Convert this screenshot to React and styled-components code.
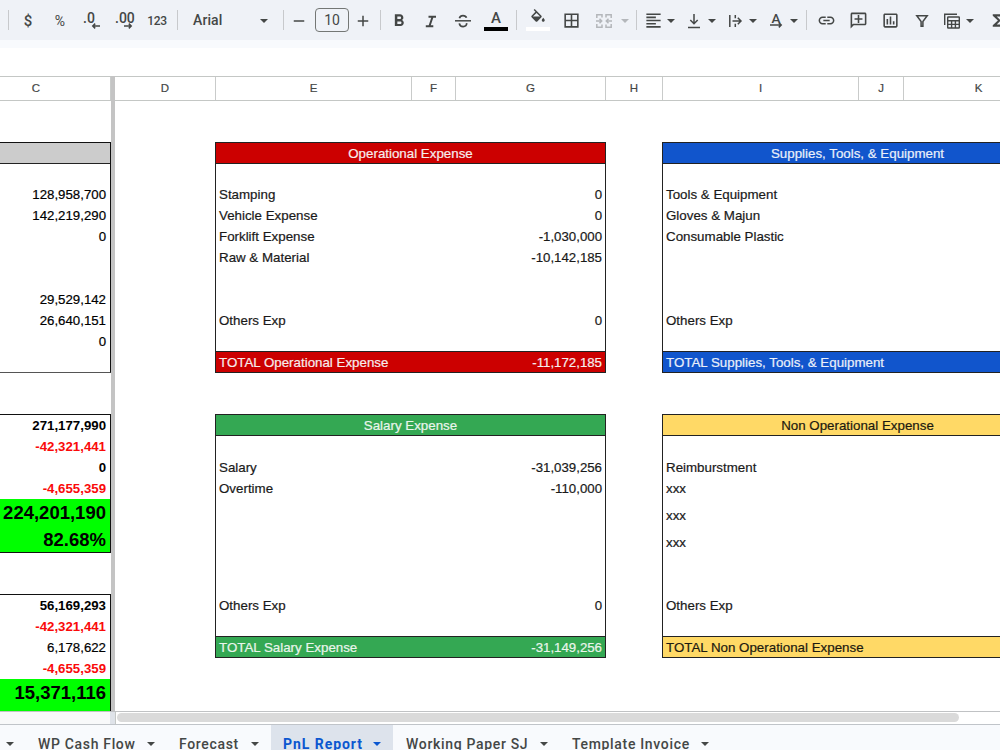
import { Fragment } from "react";
import styled, { createGlobalStyle } from "styled-components";
import {
  MdAdd,
  MdRemove,
  MdFormatBold,
  MdBorderAll,
  MdFormatAlignLeft,
  MdLink,
  MdOutlineAddComment,
  MdOutlineAssessment,
  MdFunctions,
} from "react-icons/md";

const operational = {
  title: "Operational Expense",
  total: "TOTAL Operational Expense",
  amount: "-11,172,185",
  color: "#cc0000",
  text: "#f6eded",
  rows: [
    { h: 20 },
    { label: "Stamping", value: "0" },
    { label: "Vehicle Expense", value: "0" },
    { label: "Forklift Expense", value: "-1,030,000" },
    { label: "Raw & Material", value: "-10,142,185" },
    {},
    {},
    { label: "Others Exp", value: "0" },
  ],
};

const salary = {
  title: "Salary Expense",
  total: "TOTAL Salary Expense",
  amount: "-31,149,256",
  color: "#34a853",
  text: "#eaf5ec",
  rows: [
    {},
    { label: "Salary", value: "-31,039,256" },
    { label: "Overtime", value: "-110,000" },
    { h: 27 },
    { h: 27 },
    {},
    {},
    { label: "Others Exp", value: "0" },
  ],
};

const supplies = {
  title: "Supplies, Tools, & Equipment",
  total: "TOTAL Supplies, Tools, & Equipment",
  color: "#1155cc",
  text: "#eaf0fa",
  rows: [
    { h: 20 },
    { label: "Tools & Equipment" },
    { label: "Gloves & Majun" },
    { label: "Consumable Plastic" },
    {},
    {},
    {},
    { label: "Others Exp" },
  ],
};

const nonOperational = {
  title: "Non Operational Expense",
  total: "TOTAL Non Operational Expense",
  color: "#ffd966",
  text: "#1c1a10",
  rows: [
    {},
    { label: "Reimburstment" },
    { label: "xxx" },
    { label: "xxx", h: 27 },
    { label: "xxx", h: 27 },
    {},
    {},
    { label: "Others Exp" },
  ],
};

const columns = [
  ["D", 101],
  ["E", 196],
  ["F", 44],
  ["G", 150],
  ["H", 57],
  ["I", 196],
  ["J", 45],
  ["K", 150],
];

const Arrow = ({ gap, dim }) => <Caret $gap={gap} $dim={dim} />;

const FillIcon = () => (
  <svg width="18" height="18" viewBox="0 0 24 24" fill="currentColor">
    <path d="M16.56 8.94L7.62 0 6.21 1.41l2.38 2.38-5.15 5.15c-.59.59-.59 1.54 0 2.12l5.5 5.5c.29.29.68.44 1.06.44s.77-.15 1.06-.44l5.5-5.5c.59-.58.59-1.53 0-2.12zM5.21 10L10 5.21 14.79 10H5.21zM19 11.5s-2 2.17-2 3.5c0 1.1.9 2 2 2s2-.9 2-2c0-1.33-2-3.5-2-3.5z" />
  </svg>
);

const ItalicIcon = () => (
  <svg width="18" height="18" viewBox="0 0 18 18" fill="none" stroke="currentColor" strokeWidth="2">
    <path d="M6.5 4.8H14M3.800 14.200h7.500M10.600 4.800L7.400 14.200" />
  </svg>
);

const StrikeIcon = () => (
  <svg width="18" height="18" viewBox="0 0 18 18" fill="none" stroke="currentColor">
    <path d="M1 8.8h16" strokeWidth="1.5" />
    <path d="M5.4 6.3C6 4.3 7.3 3.6 9 3.6s3 .8 3.5 2.2M5.3 11.3c.4 2.3 2 3.3 3.8 3.3 2.3 0 3.8-1.3 3.5-3.5" strokeWidth="1.7" />
  </svg>
);

const MergeIcon = () => (
  <svg width="18" height="18" viewBox="0 0 18 18" fill="none" stroke="currentColor" strokeWidth="1.5">
    <path d="M1.8 6V2.8H7V5.5M1.8 12v3.2H7v-2.7M16.2 6V2.8H11V5.5M16.2 12v3.2H11v-2.7" />
    <path d="M1 9h5.500M4.500 6.800L6.700 9l-2.200 2.200M17 9h-5.500M13.500 6.800L11.300 9l2.200 2.200" />
  </svg>
);

const BottomIcon = () => (
  <svg width="18" height="18" viewBox="0 0 18 18" fill="none" stroke="currentColor" strokeWidth="1.5">
    <path d="M9 2v9.5M5.3 8L9 11.7 12.7 8M3 15.5h12" />
  </svg>
);

const WrapIcon = () => (
  <svg width="18" height="18" viewBox="0 0 18 18" fill="none" stroke="currentColor" strokeWidth="1.5">
    <path d="M3.8 3v12M9.3 3v3.2M9.3 11.8V15M6.5 9h8M11.8 5.7L15 9l-3.2 3.3" />
  </svg>
);

const FilterIcon = () => (
  <svg width="18" height="18" viewBox="0 0 18 18" fill="none" stroke="currentColor" strokeWidth="1.5">
    <path d="M3.8 3.8h10.4L9.9 9.5v4.7H8.1V9.5z" />
  </svg>
);

const TableIcon = () => (
  <svg width="18" height="18" viewBox="0 0 18 18" fill="none" stroke="currentColor" strokeWidth="1.4">
    <path d="M1.7 13V2.2H14" />
    <rect x="4.7" y="5" width="11.6" height="11" rx=".5" />
    <path d="M4.7 8.8h11.6M4.7 12.4h11.6M8.6 8.8V16M12.4 8.8V16" />
  </svg>
);

const Decimal = ({ text, back }) => (
  <DecimalBox>
    <span>{text}</span>
    <svg width="10" height="6" viewBox="0 0 10 6" fill="none" stroke="currentColor" strokeWidth="1.5">
      <path d={back ? "M9 3H2M4.2.6L1.8 3l2.4 2.4" : "M1 3h7M5.8.6L8.2 3 5.8 5.4"} />
    </svg>
  </DecimalBox>
);

const Rotation = () => (
  <RotationBox>
    <span>A</span>
    <svg width="14" height="6" viewBox="0 0 14 6" fill="none" stroke="currentColor" strokeWidth="1.5">
      <path d="M1 3h11M9.8.6L12.200 3 9.800 5.400" />
    </svg>
  </RotationBox>
);

const Panel = ({ data }) => (
  <PanelBox>
    <PanelTitle $bg={data.color} $fg={data.text}>
      {data.title}
    </PanelTitle>
    {data.rows.map((row, i) => (
      <Row key={i} $h={row.h}>
        <span>{row.label}</span>
        <Amount>{row.value}</Amount>
      </Row>
    ))}
    <Total $bg={data.color} $fg={data.text}>
      <span>{data.total}</span>
      <Amount>{data.amount}</Amount>
    </Total>
  </PanelBox>
);

const App = () => {
  return (
    <Fragment>
      <GlobalStyle />
      <Page>
        <Toolbar>
          <Divider $gap={8} />
          <Tool $gap={7}><Sign>$</Sign></Tool>
          <Tool $gap={8}><Sign $light>%</Sign></Tool>
          <Tool $gap={8}><Decimal text=".0" back /></Tool>
          <Tool $gap={8}><Decimal text=".00" /></Tool>
          <Tool $gap={8}><Digits>123</Digits></Tool>
          <Divider $gap={9} />
          <FontName>Arial</FontName>
          <Arrow gap={0} />
          <Divider $gap={14} />
          <Tool $gap={3}><MdRemove size={18} /></Tool>
          <SizeBox>10</SizeBox>
          <Tool $gap={2}><MdAdd size={18} /></Tool>
          <Divider $gap={5} />
          <Tool $gap={6}><MdFormatBold size={20} /></Tool>
          <Tool $gap={8}><ItalicIcon /></Tool>
          <Tool $gap={8}><StrikeIcon /></Tool>
          <Tool $gap={9}>
            <Swatch $color="#000">
              <Letter>A</Letter>
            </Swatch>
          </Tool>
          <Divider $gap={8} />
          <Tool $gap={9}>
            <Swatch $color="#fff">
              <FillIcon />
            </Swatch>
          </Tool>
          <Tool $gap={9}><MdBorderAll size={19} /></Tool>
          <Tool $gap={9} $dim><MergeIcon /></Tool>
          <Arrow gap={5} dim />
          <Divider $gap={6} />
          <Tool $gap={4}><MdFormatAlignLeft size={19} /></Tool>
          <Arrow gap={2} />
          <Tool $gap={6}><BottomIcon /></Tool>
          <Arrow gap={2} />
          <Tool $gap={6}><WrapIcon /></Tool>
          <Arrow gap={2} />
          <Tool $gap={6}><Rotation /></Tool>
          <Arrow gap={2} />
          <Divider $gap={7} />
          <Tool $gap={7}><MdLink size={19} /></Tool>
          <Tool $gap={8} $flip><MdOutlineAddComment size={19} /></Tool>
          <Tool $gap={8}><MdOutlineAssessment size={19} /></Tool>
          <Tool $gap={8}><FilterIcon /></Tool>
          <Tool $gap={6}><TableIcon /></Tool>
          <Arrow gap={2} />
          <Tool $gap={10}><MdFunctions size={19} /></Tool>
        </Toolbar>
        <Strip />
        <Formula />
        <Sheet>
          <Frozen>
            <Head>
              <HeadCell $w={111} $shift={38}>C</HeadCell>
            </Head>
            <FrozenBody>
              <Block $h={231} $soft>
                <GreyHead />
                <Num $h={20} />
                <Num>128,958,700</Num>
                <Num>142,219,290</Num>
                <Num>0</Num>
                <Num />
                <Num />
                <Num>29,529,142</Num>
                <Num>26,640,151</Num>
                <Num>0</Num>
              </Block>
              <Block $h={139}>
                <Num $bold>271,177,990</Num>
                <Num $bold $red>-42,321,441</Num>
                <Num $bold>0</Num>
                <Num $bold $red>-4,655,359</Num>
                <Big $h={27}>224,201,190</Big>
                <Big $h={26}>82.68%</Big>
              </Block>
              <Block $h={130}>
                <Num $bold>56,169,293</Num>
                <Num $bold $red>-42,321,441</Num>
                <Num>6,178,622</Num>
                <Num $bold $red>-4,655,359</Num>
                <Big $h={44}>15,371,116</Big>
              </Block>
            </FrozenBody>
          </Frozen>
          <FreezeBar />
          <Main>
            <Head>
              {columns.map(([name, w]) => (
                <HeadCell key={name} $w={w}>{name}</HeadCell>
              ))}
            </Head>
            <Panels>
              <Stack>
                <Panel data={operational} />
                <Panel data={salary} />
              </Stack>
              <Stack>
                <Panel data={supplies} />
                <Panel data={nonOperational} />
              </Stack>
            </Panels>
          </Main>
        </Sheet>
        <ScrollRow>
          <ScrollLeft />
          <ScrollGap />
          <Track>
            <Thumb />
          </Track>
        </ScrollRow>
        <Tabs>
          <Tab $w={26} $pad={0}>
            <span />
            <Arrow />
          </Tab>
          <Tab $w={141}>
            <span>WP Cash Flow</span>
            <Arrow />
          </Tab>
          <Tab $w={104}>
            <span>Forecast</span>
            <Arrow />
          </Tab>
          <Tab $w={122} $active>
            <span>PnL Report</span>
            <Arrow />
          </Tab>
          <Tab $w={167} $pad={13}>
            <span>Working Paper SJ</span>
            <Arrow />
          </Tab>
          <Tab $w={161}>
            <span>Template Invoice</span>
            <Arrow />
          </Tab>
        </Tabs>
      </Page>
    </Fragment>
  );
};

export default App;

const GlobalStyle = createGlobalStyle`
  * {
    box-sizing: border-box;
  }
  body {
    margin: 0;
    overflow: hidden;
  }
`;

const Page = styled.div`
  display: flex;
  flex-direction: column;
  width: 1000px;
  height: 750px;
  overflow: hidden;
  background: #fff;
  font-family: "Liberation Sans", Arial, sans-serif;
  font-size: 13.25px;
  color: #1a1a1a;
  white-space: nowrap;
`;

const Toolbar = styled.div`
  display: flex;
  align-items: flex-start;
  height: 40px;
  padding-top: 10px;
  overflow: hidden;
  background: #eff2f7;
  color: #444746;
  font-family: Roboto, sans-serif;
`;

const Tool = styled.div`
  display: flex;
  flex: none;
  align-items: center;
  justify-content: center;
  width: 24px;
  height: 21px;
  margin-left: ${(p) => p.$gap}px;
  color: ${(p) => (p.$dim ? "#b4b7bb" : "inherit")};
  & > svg {
    flex: none;
    transform: ${(p) => (p.$flip ? "scaleX(-1)" : "none")};
  }
`;

const Divider = styled.div`
  flex: none;
  width: 1px;
  height: 20px;
  margin-left: ${(p) => p.$gap}px;
  background: #c7c9cc;
`;

const Caret = styled.i`
  flex: none;
  align-self: ${(p) => (p.$gap === undefined ? "center" : "flex-start")};
  width: 8px;
  height: 4px;
  margin: ${(p) => (p.$gap === undefined ? "0" : `9px 1px 0 ${p.$gap}px`)};
  background: ${(p) => (p.$dim ? "#b4b7bb" : "currentColor")};
  clip-path: polygon(0 0, 100% 0, 50% 100%);
`;

const Sign = styled.span`
  font-size: ${(p) => (p.$light ? 14 : 15)}px;
  font-weight: ${(p) => (p.$light ? 400 : 500)};
  line-height: 20px;
`;

const Digits = styled.span`
  font-size: 12px;
  font-weight: 500;
  letter-spacing: -0.3px;
  line-height: 20px;
  padding-left: 2px;
`;

const DecimalBox = styled.div`
  display: flex;
  flex-direction: column;
  width: 18px;
  height: 21px;
  font-size: 14px;
  font-weight: 500;
  line-height: 16px;
  & > svg {
    flex: none;
    align-self: flex-end;
    margin-top: -3px;
  }
`;

const RotationBox = styled.div`
  display: flex;
  flex: none;
  flex-direction: column;
  align-items: center;
  width: 14px;
  height: 21px;
  font-size: 13.5px;
  font-weight: 500;
  line-height: 17px;
  & > svg {
    flex: none;
    margin-top: -5px;
  }
`;

const FontName = styled.div`
  flex: none;
  width: 67px;
  margin-left: 15px;
  font-size: 14px;
  font-weight: 500;
  letter-spacing: 0.1px;
  line-height: 20px;
`;

const SizeBox = styled.div`
  flex: none;
  width: 34px;
  height: 24px;
  margin: -2px 0 0 4px;
  border: 1px solid #747775;
  border-radius: 4px;
  font-size: 14px;
  line-height: 22px;
  text-align: center;
`;

const Swatch = styled.div`
  display: flex;
  flex: none;
  align-items: center;
  justify-content: center;
  width: 24px;
  height: 21px;
  margin-top: -1px;
  border-bottom: 4px solid ${(p) => p.$color};
`;

const Letter = styled.span`
  font-size: 15px;
  font-weight: 500;
`;

const Strip = styled.div`
  height: 8px;
  background: #f8fafd;
`;

const Formula = styled.div`
  height: 28px;
`;

const Sheet = styled.div`
  display: flex;
  height: 635px;
  overflow: hidden;
`;

const Frozen = styled.div`
  flex: none;
  width: 111px;
`;

const FreezeBar = styled.div`
  flex: none;
  width: 4px;
  background: #c4c4c4;
`;

const Main = styled.div`
  flex: 1;
  min-width: 0;
  overflow: hidden;
`;

const Head = styled.div`
  display: flex;
  height: 25px;
  border-top: 1px solid #c4c7c5;
  border-bottom: 1px solid #c4c7c5;
`;

const HeadCell = styled.div`
  flex: none;
  width: ${(p) => p.$w}px;
  padding-right: ${(p) => p.$shift || 0}px;
  border-right: 1px solid #c9cbca;
  font-size: 11.5px;
  line-height: 22px;
  text-align: center;
  color: #444746;
  -webkit-text-stroke: 0.2px currentColor;
`;

const FrozenBody = styled.div`
  display: flex;
  flex-direction: column;
  gap: 41px;
  padding-top: 41px;
`;

const Block = styled.div`
  flex: none;
  height: ${(p) => p.$h}px;
  border: solid #111;
  border-width: 1px 1px 1px 0;
  border-bottom-color: ${(p) => (p.$soft ? "#555" : "#111")};
`;

const GreyHead = styled.div`
  height: 21px;
  border-bottom: 1px solid #222;
  background: #cccccc;
`;

const Num = styled.div`
  height: ${(p) => p.$h || 21}px;
  padding-right: 4px;
  font-weight: ${(p) => (p.$bold ? 700 : 400)};
  line-height: 21px;
  text-align: right;
  color: ${(p) => (p.$red ? "#fa0a0a" : "#000")};
  -webkit-text-stroke: ${(p) => (p.$bold ? 0 : 0.2)}px currentColor;
`;

const Big = styled.div`
  height: ${(p) => p.$h}px;
  padding-right: 4px;
  background: #00ff00;
  font-size: 18.5px;
  font-weight: 700;
  line-height: 28px;
  text-align: right;
  color: #000;
`;

const Panels = styled.div`
  display: flex;
  gap: 56px;
  padding: 41px 0 0 100px;
`;

const Stack = styled.div`
  display: flex;
  flex: none;
  flex-direction: column;
  gap: 41px;
  width: 391px;
`;

const PanelBox = styled.div`
  border: 1px solid #222;
  font-size: 13.33px;
  -webkit-text-stroke: 0.2px currentColor;
`;

const PanelTitle = styled.div`
  height: 21px;
  border-bottom: 1px solid #222;
  background: ${(p) => p.$bg};
  color: ${(p) => p.$fg};
  line-height: 21px;
  text-align: center;
`;

const Row = styled.div`
  display: flex;
  align-items: flex-end;
  justify-content: space-between;
  height: ${(p) => p.$h || 21}px;
  padding: 0 3px;
  line-height: 21px;
`;

const Amount = styled.span`
  font-size: 13.25px;
`;

const Total = styled.div`
  display: flex;
  justify-content: space-between;
  height: 21px;
  margin-top: 20px;
  padding: 0 3px;
  border-top: 1px solid #222;
  background: ${(p) => p.$bg};
  color: ${(p) => p.$fg};
  line-height: 22px;
`;

const ScrollRow = styled.div`
  display: flex;
  height: 14px;
  border-top: 1px solid #c0c2c4;
  border-bottom: 1px solid #c0c4c9;
`;

const ScrollLeft = styled.div`
  width: 110px;
  background: #f8f9fa;
`;

const ScrollGap = styled.div`
  width: 6px;
  background: #dfe3e9;
  border-right: 1px solid #c4c7c5;
`;

const Track = styled.div`
  flex: 1;
  padding: 1px 1px 2px;
`;

const Thumb = styled.div`
  width: 842px;
  height: 9px;
  border-radius: 5px;
  background: #dadada;
`;

const Tabs = styled.div`
  display: flex;
  height: 25px;
  overflow: hidden;
  background: #f8fafd;
  font-family: Roboto, sans-serif;
  font-size: 14px;
`;

const Tab = styled.div`
  display: flex;
  flex: none;
  align-items: center;
  justify-content: space-between;
  width: ${(p) => p.$w}px;
  height: 38px;
  padding: 0 12px 0 ${(p) => (p.$pad === undefined ? 12 : p.$pad)}px;
  background: ${(p) => (p.$active ? "#dde3ec" : "transparent")};
  color: ${(p) => (p.$active ? "#0b57d0" : "#444746")};
  font-weight: ${(p) => (p.$active ? 700 : 500)};
  letter-spacing: ${(p) => (p.$active ? 0.95 : 0.67)}px;
`;
